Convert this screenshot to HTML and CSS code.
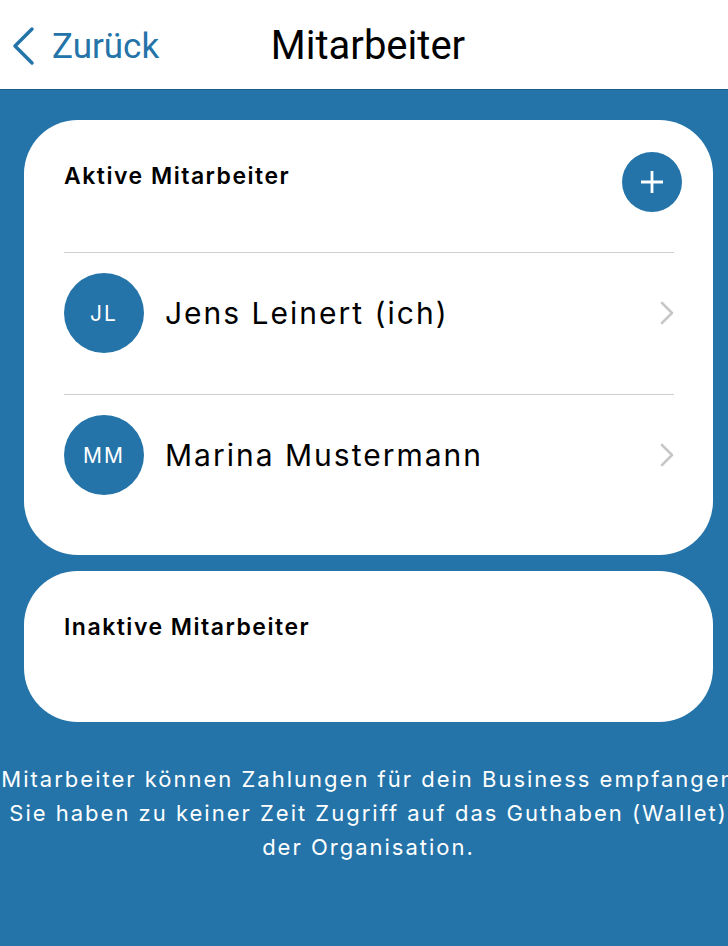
FILE: index.html
```html
<!DOCTYPE html>
<html lang="de">
<head>
    <meta charset="UTF-8">
    <meta name="viewport" content="width=device-width, initial-scale=1.0">
    <title>Mitarbeiter</title>
    <link rel="stylesheet" href="styles.css">
</head>
<body>

<header class="topbar">
    <a class="back" href="#">
        <svg class="back-icon" width="26" height="40" viewBox="0 0 26 40">
            <path d="M22 3 L5 20 L22 37" fill="none" stroke="#2474a9" stroke-width="3.5" stroke-linecap="round" stroke-linejoin="round"/>
        </svg>
        <span>Zurück</span>
    </a>
    <h1 class="title">Mitarbeiter</h1>
    <span></span>
</header>

<main class="content">
    <!-- aktive -->
    <section class="card">
        <div class="card-head">
            <h2>Aktive Mitarbeiter</h2>
            <button class="add-btn" type="button">
                <svg width="24" height="24" viewBox="0 0 24 24">
                    <path d="M12 1 V23 M1 12 H23" stroke="#fff" stroke-width="2.8"/>
                </svg>
            </button>
        </div>
        <ul class="staff-list">
            <li class="staff-row">
                <span class="avatar">JL</span>
                <span class="name">Jens Leinert (ich)</span>
                <svg class="chevron" width="14" height="24" viewBox="0 0 14 24">
                    <path d="M2 2 L12 12 L2 22" fill="none" stroke="#c7c7c9" stroke-width="2.6" stroke-linecap="round" stroke-linejoin="round"/>
                </svg>
            </li>
            <li class="staff-row">
                <span class="avatar">MM</span>
                <span class="name">Marina Mustermann</span>
                <svg class="chevron" width="14" height="24" viewBox="0 0 14 24">
                    <path d="M2 2 L12 12 L2 22" fill="none" stroke="#c7c7c9" stroke-width="2.6" stroke-linecap="round" stroke-linejoin="round"/>
                </svg>
            </li>
        </ul>
    </section>

    <!-- inaktive -->
    <section class="card card-inactive">
        <div class="card-head">
            <h2>Inaktive Mitarbeiter</h2>
        </div>
    </section>

    <p class="note">
        Mitarbeiter können Zahlungen für dein Business empfangen<br>
        Sie haben zu keiner Zeit Zugriff auf das Guthaben (Wallet)<br>
        der Organisation.
    </p>
</main>

</body>
</html>
```

FILE: styles.css
```css
body {
    margin: 0;
    min-height: 100vh;
    background-color: #2474a9;
    font-family: Inter, "Noto Sans", sans-serif;
    overflow-x: hidden;
}
.topbar {
    display: grid;
    grid-template-columns: 1fr auto 1fr;
    align-items: center;
    height: 89px;
    padding-left: 8px;
    background-color: #fff;
    border-bottom: 1px solid #1b5d8a;
    font-family: Roboto, "Liberation Sans", sans-serif;
}
.back {
    display: flex;
    align-items: center;
    gap: 16px;
    margin-left: 2px;
    color: #2474a9;
    text-decoration: none;
    font-size: 35px;
    padding-top: 4px;
}
.back-icon {
    margin-top: -2px;
}
.title {
    margin: 0;
    font-size: 40px;
    font-weight: 400;
    color: #000;
    padding-top: 2px;
}
.content {
    padding: 30px 15px 0 24px;
}
.card {
    background-color: #fff;
    border-radius: 54px;
    padding: 32px 39px 19px 40px;
}
.card-head {
    display: flex;
    justify-content: space-between;
    align-items: flex-start;
    height: 60px;
    margin-right: -8px;
}
.card-head h2 {
    margin: 10px 0 0;
    font-size: 23px;
    font-weight: 600;
    letter-spacing: 1.5px;
    color: #000;
}
.add-btn {
    width: 60px;
    height: 60px;
    border: none;
    border-radius: 50%;
    background-color: #2474a9;
    display: flex;
    align-items: center;
    justify-content: center;
    padding: 0;
    cursor: pointer;
}
.staff-list {
    list-style: none;
    margin: 40px 0 0;
    padding: 0;
}
.staff-row {
    display: flex;
    align-items: center;
    gap: 21px;
    border-top: 1px solid #cfcfcf;
    padding: 20px 0 41px;
}
.avatar {
    width: 80px;
    height: 80px;
    border-radius: 50%;
    background-color: #2474a9;
    color: #fff;
    display: flex;
    align-items: center;
    justify-content: center;
    font-size: 21px;
    letter-spacing: 2px;
}
.name {
    flex: 1;
    font-size: 30px;
    letter-spacing: 2px;
    color: #000;
}
.card-inactive {
    margin-top: 16px;
    height: 151px;
    box-sizing: border-box;
}
.note {
    margin: 40px -40px 0;
    text-align: center;
    white-space: nowrap;
    color: #fff;
    font-size: 22px;
    line-height: 34px;
    letter-spacing: 2px;
}
```
